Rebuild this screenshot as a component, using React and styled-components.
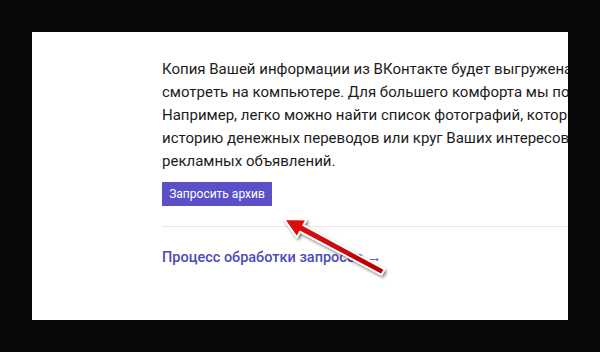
import React from "react";
import styled, { createGlobalStyle } from "styled-components";

const Global = createGlobalStyle`
  html, body { margin: 0; padding: 0; background: #080808; }
  body { width: 600px; height: 352px; overflow: hidden; }
`;

const Frame = styled.div`
  width: 600px;
  height: 352px;
  box-sizing: border-box;
  padding: 32px;
  background: #080808;
`;

const Panel = styled.div`
  position: relative;
  width: 536px;
  height: 288px;
  background: #ffffff;
  overflow: hidden;
  box-sizing: border-box;
  padding: 26px 0 0 130px;
  font-family: "Roboto", "Liberation Sans", sans-serif;
`;

const Content = styled.div`
  width: 520px;
  display: flex;
  flex-direction: column;
  align-items: flex-start;
`;

const Paragraph = styled.p`
  margin: 0;
  font-size: 15px;
  line-height: 23px;
  color: #1c1c1c;
  white-space: nowrap;
`;

const Line = styled.span`
  display: block;
`;

const Button = styled.button`
  margin-top: 9px;
  width: 110px;
  height: 24px;
  border: none;
  background: #5b50c8;
  color: #ffffff;
  font-family: "Roboto", "Liberation Sans", sans-serif;
  font-size: 12px;
  padding: 0;
  cursor: pointer;
`;

const Divider = styled.hr`
  align-self: stretch;
  margin: 20px 0 0;
  border: none;
  border-top: 1px solid #e7e8ec;
`;

const Link = styled.a`
  margin-top: 21px;
  font-size: 14.5px;
  line-height: 20px;
  font-weight: 500;
  color: #4e4ab8;
  text-decoration: none;
`;

const ArrowSvg = styled.svg`
  position: absolute;
  left: 240px;
  top: 178px;
  overflow: visible;
`;

function RedArrow() {
  const tipX = 12, tipY = 9, tailX = 111, tailY = 62;
  const dx = tailX - tipX, dy = tailY - tipY;
  const len = Math.hypot(dx, dy);
  const ux = dx / len, uy = dy / len;
  const px = -uy, py = ux;
  const headLen = 20, headW = 10, shaftW = 3.6;
  const bx = tipX + ux * headLen, by = tipY + uy * headLen;
  const pts = [
    [tipX, tipY],
    [bx + px * headW, by + py * headW],
    [bx + px * shaftW, by + py * shaftW],
    [tailX + px * shaftW * 0.85, tailY + py * shaftW * 0.85],
    [tailX - px * shaftW * 0.85, tailY - py * shaftW * 0.85],
    [bx - px * shaftW, by - py * shaftW],
    [bx - px * headW, by - py * headW],
  ]
    .map((p) => p.map((v) => v.toFixed(1)).join(","))
    .join(" ");
  return (
    <ArrowSvg width="140" height="80" viewBox="0 0 140 80">
      <defs>
        <filter id="sh" x="-30%" y="-30%" width="160%" height="160%">
          <feDropShadow dx="1.5" dy="2" stdDeviation="1.6" floodColor="#000" floodOpacity="0.5" />
        </filter>
        <linearGradient id="rg" x1="0" y1="0" x2="1" y2="1">
          <stop offset="0" stopColor="#e01212" />
          <stop offset="1" stopColor="#b50000" />
        </linearGradient>
      </defs>
      <polygon points={pts} fill="url(#rg)" stroke="#ffffff" strokeWidth="1.8" strokeLinejoin="round" filter="url(#sh)" />
    </ArrowSvg>
  );
}

export default function App() {
  return (
    <>
      <Global />
      <Frame>
        <Panel>
          <Content>
            <Paragraph>
              <Line>Копия Вашей информации из ВКонтакте будет выгружена в архив, который можно</Line>
              <Line>смотреть на компьютере. Для большего комфорта мы подготовили для Вас HTML-страницы.</Line>
              <Line>Например, легко можно найти список фотографий, которые Вы отметили как понравившиеся,</Line>
              <Line>историю денежных переводов или круг Ваших интересов, который формируется для показа</Line>
              <Line>рекламных объявлений.</Line>
            </Paragraph>
            <Button>Запросить архив</Button>
            <Divider />
            <Link href="#">Процесс обработки запросов →</Link>
          </Content>
          <RedArrow />
        </Panel>
      </Frame>
    </>
  );
}
